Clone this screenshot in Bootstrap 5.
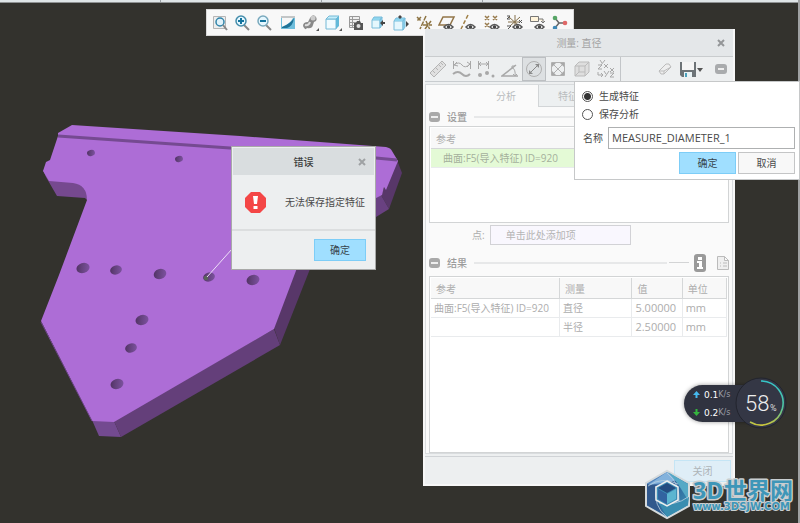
<!DOCTYPE html>
<html lang="zh-CN">
<head>
<meta charset="utf-8">
<meta name="viewport" content="width=device-width, initial-scale=1">
<title>测量: 直径</title>
<link href="https://cdn.jsdelivr.net/npm/bootstrap@5.3.0/dist/css/bootstrap.min.css" rel="stylesheet">
<style>
  body { background: #33322d; font-family: "Open Sans", "Noto Sans CJK SC", sans-serif; font-size: 10px; line-height: 16px; color: #4a4a4a; }
  svg { display: block; }
  .desk { min-height: 100vh; }
  .desk-edge { right: 0; top: 0; bottom: 0; width: 2px; background: #9fa1a2; }
  .ribbon-edge { height: 3px; background: #dfe5e7; border-bottom: 1px solid #8f9293; }
  .ribbon-edge i { width: 1px; height: 2px; background: #9aa0a4; margin-left: 160px; }
  .model { left: 0; top: 0; width: 420px; height: 460px; }
  .btn { --bs-btn-font-size: 10px; --bs-btn-line-height: 16px; --bs-btn-padding-y: 2px; --bs-btn-padding-x: 0; --bs-btn-border-radius: 0; width: 57px; height: 22px; }
  .btn-sky { --bs-btn-bg: #a0dfff; --bs-btn-border-color: #7dcdf7; --bs-btn-color: #37444c; }
  .btn-plain { --bs-btn-bg: #f8f8f8; --bs-btn-border-color: #c4c5c6; --bs-btn-color: #4a4a4a; }
  .btn-close-panel { --bs-btn-bg: #dfeef7; --bs-btn-border-color: #c5e5f5; --bs-btn-color: #aeb4b8; }
  .tool { border: 0; background: none; padding: 0; }
  .viewbar { left: 206px; top: 9px; height: 27px; width: 368px; background: #f8f8f8; border: 1px solid #d9d9d9; padding: 0 4px; }
  .viewbar svg { width: 18px; height: 18px; }
  .panel { left: 423px; top: 29px; width: 312px; background: #edeff0; border: 2px solid #f7f7f7; border-top: 0; color: #adadad; }
  .panel-title { height: 28px; background: #e4e7e9; border-bottom: 1px solid #c9ccce; color: #a2a2a2; font-size: 10px; }
  .x-mark { right: 8px; }
  .panel-tools { height: 25px; border-bottom: 1px solid #c8cccf; }
  .panel-tools .group .tool { width: 24px; height: 24px; display: grid; place-items: center; }
  .panel-tools .tool.chosen { background: #dde0e2; border: 1px solid #bcbfc2; }
  .panel-tools .group { border-right: 1px solid #c3c6c9; padding-left: 1px; width: 196px; }
  .panel-tools .side { gap: 8px; padding-right: 6px; }
  .panel-body { margin-top: 2px; background: #fafafa; border: 1px solid #d9dcde; }
  .tabs { height: 22px; }
  .tabs .nav-link { width: 112px; padding: 2px 0 2px 70px; color: #b9bcbe; border: 0; background: #fafafa; border-radius: 0; height: 22px; font-size: 10px; line-height: 16px; text-align: left; }
  .tabs .spare { background: #edf0f1; border: 1px solid #d2d5d7; border-top: 0; padding-left: 19px; }
  .tabs .spare:last-child { width: auto; flex: 1; }
  .sect { height: 19px; padding: 0 3px; gap: 7px; }
  .sect h2 { font-size: 10px; line-height: 16px; margin: 0; font-weight: 500; color: #9c9c9c; }
  .rule { height: 2px; background: #e7e8e9; }
  .rule-end { width: 20px; height: 1px; background: #d3d4d5; margin-left: -5px; margin-right: -2px; }
  .well-box { margin: 0 3px; background: #fff; border: 1px solid #d2d4d5; padding: 1px; }
  .refs { height: 97px; }
  .results { height: 177px; }
  .grid { --bs-table-bg: transparent; margin: 0; color: #adadad; table-layout: fixed; white-space: nowrap; }
  .grid th, .grid td { padding: 1px 3px; height: 19px; line-height: 16px; border: 0 solid #e9ebed; border-width: 0 1px 1px 0; font-weight: 400; color: #adadad; }
  .grid th { height: 20px; padding: 2px 5px 1px; background: #f8f8f8; border-color: #d5d7d8; }
  .grid .num { font-size: 11px; }
  .refs th, .refs td { border-right: 0; }
  .refs td { background: #e4fad6; padding-left: 12px; color: #a4b09c; }
  .point { margin: 2px 0 0 46px; height: 20px; gap: 5px; }
  .point input { width: 141px; height: 20px; background: #f9f7fe; color: #b5b5b5; }
  .form-control { font-size: 10px; line-height: 16px; padding: 0 15px 2px; border: 1px solid #d2d2d6; border-radius: 0; min-height: 0; }
  .panel-foot { height: 28px; border-top: 1px solid #d0d3d6; padding: 3px 2px; margin-top: 2px; }
  .pop { right: 0; top: 81px; width: 226px; height: 99px; background: #fff; border: 1px solid #c6c8c9; padding: 5px 4px 6px 7px; z-index: 3; }
  .pop .form-check { min-height: 18px; padding: 0; margin: 0; gap: 6px; }
  .pop .form-check-input { width: 11px; height: 11px; margin: 0; float: none; border: 1px solid #555; }
  .pop .form-check-input:checked { background: radial-gradient(circle, #333 0 3px, #fff 4px); }
  .pop .form-control { height: 22px; padding: 1px 3px 3px; font-size: 11px; border-color: #aeb0b1; color: #4a4a4a; }
  .pop .name-row { gap: 5px; padding-left: 1px; }
  .pop .acts { gap: 2px; margin-top: 3px; }
  .alert-win { left: 231px; top: 146px; width: 145px; height: 124px; background: #edeff0; border: 1px solid #a8a9a8; z-index: 3; }
  .alert-win header { height: 27px; background: #d9dddf; color: #3d3d3d; font-weight: 500; margin: 1px 1px 0; }
  .alert-win main { height: 56px; border-bottom: 2px solid #dcdedf; padding: 0 10px 0 13px; }
  .alert-win footer { padding: 8px 9px; }
  .alert-win .btn { width: 52px; }
  .net { left: 684px; top: 377px; z-index: 4; }
  .net-rate { width: 74px; height: 37px; border-radius: 19px 0 0 19px; background: #303340; padding: 1px 0 0 9px; margin-right: -23px; font: 9px/18px "DejaVu Sans", sans-serif; color: #fff; box-shadow: 0 0 4px #0006; }
  .net-rate b { font-weight: 400; }
  .net-rate small { font-size: 8px; color: #9b9da6; }
  .net-rate svg { margin-right: 4px; }
  .brand-mark { left: 642px; top: 466px; z-index: 5; }
</style>
</head>
<body>
<div class="desk position-relative overflow-hidden">
  <div class="ribbon-edge d-flex"><i></i><i></i><i></i></div>
  <div class="desk-edge position-absolute"></div>

  <svg class="model position-absolute" viewBox="0 0 420 460" aria-hidden="true">
    <defs><linearGradient id="bore" x1="0" x2="1" y2=".3"><stop stop-color="#4c2e5d"/><stop offset=".45" stop-color="#62407a"/><stop offset="1" stop-color="#79509a"/></linearGradient></defs>
    <path fill="#76498f" d="M43 170L46 177L57 196L85 198L88 201L88 185L60 178Z"/>
    <path fill="#734a90" d="M92 420L99 436L121 437L114 421Z"/>
    <path fill="#643f7a" d="M114 421L121 437L280 345L274 329Z"/>
    <path fill="#583769" d="M274 328L280 345L310 269L330 240L297 265Z"/>
    <path fill="#583769" d="M397 160L402 173L389 209L381 195Z"/>
    <path fill="#694181" d="M381 195L389 209L376 217L350 230L350 210Z"/>
    <path fill="#ad6dd6" d="M72 125L240 136L386 147Q391 148 392 151L398 161L386 190L384 187L382 195L345 214L297 268L274 329L114 422L92 421L41 321L59 275L87 200Q87 185 73 183L49 181L43 171L46 162L50 160L58 136L58 133Z"/>
    <path fill="none" stroke="#754a91" stroke-width="3" d="M58 136L230 148L376 158L397 160"/>
    <path fill="none" stroke="#6c4586" d="M41 322L92 421"/>
    <g fill="url(#bore)">
      <ellipse cx="91" cy="153" rx="4" ry="3" transform="rotate(-15 91 153)"/>
      <ellipse cx="179" cy="159" rx="4" ry="3" transform="rotate(-15 179 159)"/>
      <ellipse cx="83" cy="268" rx="6.7" ry="5" transform="rotate(-18 83 268)"/>
      <ellipse cx="116" cy="270" rx="6" ry="4.5" transform="rotate(-18 116 270)"/>
      <ellipse cx="160" cy="274" rx="6.4" ry="5" transform="rotate(-18 160 274)"/>
      <ellipse cx="209" cy="277" rx="6" ry="4.5" transform="rotate(-18 209 277)"/>
      <ellipse cx="253" cy="280" rx="6.5" ry="5" transform="rotate(-18 253 280)"/>
      <ellipse cx="142" cy="320" rx="6.6" ry="5" transform="rotate(-18 142 320)"/>
      <ellipse cx="131" cy="348" rx="6" ry="4.6" transform="rotate(-18 131 348)"/>
      <ellipse cx="117" cy="384" rx="6.6" ry="5" transform="rotate(-18 117 384)"/>
    </g>
    <circle cx="206" cy="278" r="2.3" fill="#59645a"/>
    <path stroke="#eee0f8" d="M207 277L232 249"/>
  </svg>

  <!-- View toolbar -->
  <nav class="viewbar position-absolute d-flex align-items-center justify-content-between" aria-label="视图">
    <button class="tool" aria-label="重新调整"><svg viewBox="0 0 18 18" fill="none"><path d="M2.500 2.500h12v12h-12z" stroke="#b5b5b5" fill="#eee"/><circle cx="9" cy="8" r="4" stroke="#3184a9" stroke-width="1.500" fill="#e0f2fa"/><path d="M12 11l4 5" stroke="#888" stroke-width="2"/></svg></button>
    <button class="tool" aria-label="放大"><svg viewBox="0 0 18 18" fill="none"><path d="M10 11l5 5" stroke="#888" stroke-width="2"/><circle cx="7" cy="7" r="5" stroke="#448dab" stroke-width="1.500" fill="#e5f7ff"/><path d="M4 7h6M7 4v6" stroke="#14749e" stroke-width="2"/></svg></button>
    <button class="tool" aria-label="缩小"><svg viewBox="0 0 18 18" fill="none"><path d="M10 11l5 5" stroke="#888" stroke-width="2"/><circle cx="7" cy="7" r="5" stroke="#79a9bd" stroke-width="1.500" fill="#e5f7ff"/><path d="M4 7h6" stroke="#14749e" stroke-width="2"/></svg></button>
    <button class="tool" aria-label="重画"><svg viewBox="0 0 18 18"><path fill="#c3c6c7" d="M2 2h14v2H2z"/><path fill="#6fbedc" d="M2 4h14v11H2z"/><path fill="#f7f7f7" d="M3 4h11Q11 10 3 13z"/><path fill="#1e7397" d="M3 13Q11 10 15 4Q14 12 8 14H3z"/></svg></button>
    <button class="tool" aria-label="渲染"><svg viewBox="0 0 18 18"><path fill="#8a8a8a" d="M1 12q0-4 5-4l2-4q3-5 6-1q2 4-2 5l-1 3q-1 4-6 3q-2 3-4-2"/><circle cx="11" cy="4" r="2.500" fill="#ccc"/><path d="M3 11q4 1 5-3" stroke="#ddd" stroke-width="2" fill="none"/><path fill="#555" d="M17 14v3h-3z"/></svg></button>
    <button class="tool" aria-label="显示样式"><svg viewBox="0 0 18 18"><path fill="#f1fbff" stroke="#74b9d6" d="M2 5h10v10H2z"/><path fill="#c3edfa" stroke="#74b9d6" d="M2 5l3-3h10l-3 3z"/><path fill="#62b9d9" d="M12 5l3-3v10l-3 3z"/><path fill="#555" d="M18 14v3h-3z"/></svg></button>
    <button class="tool" aria-label="已保存方向"><svg viewBox="0 0 18 18"><path fill="#eee" stroke="#999" d="M2.500 2.500h10v11h-10zM2 5.500h10M2 8.500h10M2 11.500h10M5.500 3v11"/><path fill="#555" d="M7 9h2l1-2h3l1 2h2v7H7z"/><circle cx="11.500" cy="12" r="2" fill="#ddd"/></svg></button>
    <button class="tool" aria-label="视图管理器"><svg viewBox="0 0 18 18"><path fill="#e5f7fd" stroke="#7abddb" d="M2 6h8v8H2z"/><path fill="#8ed5ee" stroke="#7abddb" d="M2 6l2-3h8l-2 3M10 6l2-3v8l-2 3z"/><path fill="#444" d="M10 9l3-3v2h2v2h-2v2z"/></svg></button>
    <button class="tool" aria-label="透视图"><svg viewBox="0 0 18 18"><path fill="#e5f7fd" stroke="#7abddb" d="M2 7h9v9H2z"/><path fill="#8ed5ee" stroke="#7abddb" d="M2 7l2-3h9l-2 3M11 7l2-3v9l-2 3z"/><path fill="#444" d="M6 3l2-2 2 2-2 2zM14 7l3 3-3 3z"/></svg></button>
    <button class="tool" aria-label="基准显示"><svg viewBox="0 0 18 18" fill="none" stroke="#8d7443" stroke-width="1.500"><path d="M2 3l4 4M6 3L2 7M11 2L5 15M8 11h9M10 15l6-8M11 7l4 9" stroke-dasharray="5 1"/></svg></button>
    <button class="tool" aria-label="平面显示"><svg viewBox="0 0 18 18" fill="none"><path d="M5 3h11l-4 8H1z" stroke="#927548" stroke-width="1.500"/><path fill="#eee" stroke="#555" stroke-width="1.500" d="M6 13q4.500-5 9 0q-4.500 5-9 0z"/><circle cx="10.500" cy="13" r="1.700" fill="#444"/></svg></button>
    <button class="tool" aria-label="轴显示"><svg viewBox="0 0 18 18" fill="none"><path d="M8 1L1 15" stroke="#a18147" stroke-width="1.500" stroke-dasharray="4 2"/><path fill="#eee" stroke="#555" stroke-width="1.500" d="M6 13q4.500-5 9 0q-4.500 5-9 0z"/><circle cx="10.500" cy="13" r="1.700" fill="#444"/></svg></button>
    <button class="tool" aria-label="点显示"><svg viewBox="0 0 18 18" fill="none"><path d="M2 2l4 4M6 2L2 6M10 2l4 4M14 2l-4 4M2 9l4 4M6 9l-4 4" stroke="#987b4d" stroke-width="1.500"/><path fill="#eee" stroke="#555" stroke-width="1.500" d="M7 13q4.500-5 9 0q-4.500 5-9 0z"/><circle cx="11.500" cy="13" r="1.700" fill="#444"/></svg></button>
    <button class="tool" aria-label="坐标系显示"><svg viewBox="0 0 18 18" fill="none"><path d="M9 1v10M3 3l10 9M14 3L4 12M2 8h12" stroke="#85714b"/><path d="M1 2h3L1 5h3M1 12h4l-4 4h4M13 6l3 3M16 6l-3 3" stroke="#555"/><path fill="#eee" stroke="#555" stroke-width="1.500" d="M7 13q4.500-5 9 0q-4.500 5-9 0z"/><circle cx="11.500" cy="13" r="1.700" fill="#444"/></svg></button>
    <button class="tool" aria-label="注释显示"><svg viewBox="0 0 18 18" fill="none"><path fill="#fff4db" stroke="#777" d="M2.500 2.500h8v5h-8zM11 5h4v4M13 7l2 2 2-2"/><path fill="#eee" stroke="#555" stroke-width="1.500" d="M7 13q4.500-5 9 0q-4.500 5-9 0z"/><circle cx="11.500" cy="13" r="1.700" fill="#444"/></svg></button>
    <button class="tool" aria-label="旋转中心"><svg viewBox="0 0 18 18"><path d="M4 4l4 5h6M8 9l-4 5" stroke="#666" stroke-width="1.500" fill="none"/><circle cx="4" cy="4" r="2.300" fill="#57a566"/><circle cx="14" cy="9" r="2.300" fill="#df6868"/><circle cx="4" cy="14" r="2.300" fill="#3f88b5"/></svg></button>
  </nav>

  <!-- Measure panel -->
  <section class="panel position-absolute" aria-label="测量">
    <header class="panel-title position-relative d-flex align-items-center justify-content-center">测量: 直径
      <button class="tool x-mark position-absolute" aria-label="关闭窗口"><svg width="8" height="8" viewBox="0 0 8 8" stroke="#949698" stroke-width="2"><path d="M1 1l6 6M7 1L1 7"/></svg></button>
    </header>
    <div class="panel-tools d-flex align-items-center">
      <div class="group d-flex">
        <button class="tool" aria-label="汇总"><svg width="18" height="18" viewBox="0 0 18 18" fill="#e0e0e0" stroke="#b4b4b4"><path d="M1 13L13 1l4 4L5 17zM4 11l2 2M7 8l2 2M10 5l2 2M12 3l2 2"/></svg></button>
        <button class="tool" aria-label="长度"><svg width="20" height="18" viewBox="0 0 20 18" fill="none" stroke="#a8a8a8"><path d="M1.500 1v8M18.500 1v8M2 5q5-4 8 0t8-1M5 2L2 5l4 1M15 2l3 2-3 3"/><path stroke-width="2" d="M1 14q5-4 9 0t8 0"/></svg></button>
        <button class="tool" aria-label="距离"><svg width="18" height="18" viewBox="0 0 18 18" fill="none" stroke="#a8a8a8"><path d="M1.500 1v8M11.500 1v8M2 4h9M4 2L2 4l2 2M9 2l2 2-2 2"/><g fill="#a8a8a8" stroke="none"><circle cx="3" cy="15" r="2"/><circle cx="10" cy="13" r="2"/><circle cx="16" cy="16" r="1.500"/></g></svg></button>
        <button class="tool" aria-label="角度"><svg width="18" height="18" viewBox="0 0 18 18" fill="none" stroke="#a8a8a8"><path stroke-width="1.500" d="M15 5L1 16h16"/><path d="M11 7q4 3 3 9M11 9V6h3M12 14l2 2 2-2"/></svg></button>
        <button class="tool chosen" aria-label="直径" aria-pressed="true"><svg width="18" height="18" viewBox="0 0 18 18" fill="none" stroke="#b0b0b0"><circle cx="9" cy="9" r="7.500"/><path stroke="#8b8b8b" d="M5 13l8-8"/><path fill="#8b8b8b" stroke="none" d="M4 14v-4l4 4zM14 4v4l-4-4z"/></svg></button>
        <button class="tool" aria-label="面积"><svg width="18" height="18" viewBox="0 0 18 18" fill="none" stroke="#b0b0b0"><path d="M2.500 2.500h13v13h-13zM4 4l10 10M14 4L4 14"/><path fill="#a8a8a8" stroke="none" d="M3 3h4L3 7zM15 3v4l-4-4zM15 15h-4l4-4zM3 15v-4l4 4z"/></svg></button>
        <button class="tool" aria-label="体积"><svg width="18" height="18" viewBox="0 0 18 18" fill="#dedede" stroke="#bbb"><path d="M2 6l4-4h10v10l-4 4H2zM2 6h10v10M12 6l4-4M6 6v6l-4 4M6 12h6"/></svg></button>
        <button class="tool" aria-label="变换"><svg width="20" height="18" viewBox="0 0 20 18" fill="none" stroke="#a8a8a8"><path d="M4 0l2 3M9 0L5 5M2 5h4L2 9h4M8 4l4 4M12 4L8 8M14 8l4 4M18 8l-4 4M14 13h4l-4 4h4M8 11l2 3M13 11l-4 6M2 12v3h5M5 13l2 2-2 2"/></svg></button>
      </div>
      <div class="side d-flex flex-fill align-items-center justify-content-end">
        <button class="tool" aria-label="清除"><svg width="14" height="12" viewBox="0 0 14 12" fill="#eee" stroke="#bbb"><path d="M1 8l7-7h3l2 3-7 7H3zM1 8h5l7-4M6 8v3"/></svg></button>
        <button class="tool" aria-label="保存"><svg width="23" height="17" viewBox="0 0 23 17"><path fill="#6d7377" d="M0 1h16v15H2l-2-2z"/><path fill="#f5f5f5" d="M2 1h12v8H2z"/><path fill="#e9f3f6" d="M4 11h8v5H4z"/><path fill="#4ba0bb" d="M5 12h2v4H5z"/><path fill="#555" d="M17 7h6l-3 4z"/></svg></button>
        <button class="tool ms-1" aria-label="收起"><svg width="12" height="10" viewBox="0 0 12 10"><rect width="12" height="10" rx="3" fill="#a9abad"/><path stroke="#eee" stroke-width="2" d="M3 5h6"/></svg></button>
      </div>
    </div>
    <div class="panel-body">
      <div class="tabs nav flex-nowrap">
        <button class="nav-link">分析</button>
        <button class="nav-link spare">特征</button>
      </div>
      <div class="sect d-flex align-items-center">
        <svg width="11" height="10" viewBox="0 0 11 10"><rect width="11" height="10" rx="3" fill="#a9a9a9"/><path stroke="#eee" stroke-width="2" d="M2 5h7"/></svg>
        <h2>设置</h2><span class="rule flex-fill"></span>
      </div>
      <div class="well-box refs">
        <table class="grid table"><thead><tr><th scope="col">参考</th></tr></thead><tbody><tr><td>曲面:F5(导入特征) ID=920</td></tr></tbody></table>
      </div>
      <div class="point d-flex align-items-center">
        <label for="pt">点:</label><input id="pt" class="form-control" value="单击此处添加项">
      </div>
      <div class="sect d-flex align-items-center mt-2 mb-1">
        <svg width="11" height="10" viewBox="0 0 11 10"><rect width="11" height="10" rx="3" fill="#a9a9a9"/><path stroke="#eee" stroke-width="2" d="M2 5h7"/></svg>
        <h2>结果</h2><span class="rule flex-fill"></span><span class="rule-end"></span>
        <button class="tool" aria-label="信息"><svg width="12" height="18" viewBox="0 0 12 18"><rect width="12" height="18" rx="3" fill="#9a9a9a"/><path fill="#fff" d="M4 3h4v3H4zM3 7h5v6h1v2H3v-2h2V9H3z"/></svg></button>
        <button class="tool ms-1" aria-label="报告"><svg width="12" height="14" viewBox="0 0 12 14" fill="#efefef" stroke="#bbb"><path d="M.5.500h7l4 4v9H.5zM7.500.500v4h4M3 7h1M3 10h1M6 7h4M6 10h4"/></svg></button>
      </div>
      <div class="well-box results">
        <table class="grid table">
          <colgroup><col style="width:43.5%"><col style="width:24.5%"><col style="width:17%"><col></colgroup>
          <thead><tr><th scope="col">参考</th><th scope="col">测量</th><th scope="col">值</th><th scope="col">单位</th></tr></thead>
          <tbody><tr><td>曲面:F5(导入特征) ID=920</td><td>直径</td><td class="num">5.00000</td><td class="num">mm</td></tr>
          <tr><td></td><td>半径</td><td class="num">2.50000</td><td class="num">mm</td></tr></tbody>
        </table>
      </div>
    </div>
    <footer class="panel-foot d-flex justify-content-end"><button class="btn btn-close-panel">关闭</button></footer>
  </section>

  <!-- Save options -->
  <form class="pop position-absolute">
    <div class="form-check d-flex align-items-center"><input class="form-check-input" type="radio" name="mode" id="mk" checked><label for="mk">生成特征</label></div>
    <div class="form-check d-flex align-items-center"><input class="form-check-input" type="radio" name="mode" id="sv"><label for="sv">保存分析</label></div>
    <div class="name-row d-flex align-items-center mt-1"><label class="flex-shrink-0" for="nm">名称</label><input id="nm" class="form-control" value="MEASURE_DIAMETER_1"></div>
    <div class="acts d-flex justify-content-end"><button type="button" class="btn btn-sky">确定</button><button type="button" class="btn btn-plain">取消</button></div>
  </form>

  <!-- Error message -->
  <section class="alert-win position-absolute" role="alertdialog" aria-labelledby="err">
    <header class="position-relative d-flex align-items-center justify-content-center"><span id="err">错误</span>
      <button class="tool x-mark position-absolute" aria-label="关闭提示"><svg width="8" height="8" viewBox="0 0 8 8" stroke="#9fa2a4" stroke-width="2"><path d="M1 1l6 6M7 1L1 7"/></svg></button>
    </header>
    <main class="d-flex align-items-center justify-content-between">
      <svg width="21" height="21" viewBox="0 0 21 21"><path fill="#f44646" d="M6 0h9l6 6v9l-6 6H6l-6-6V6z"/><path fill="#fff" d="M8 4h5l-1 8H9zM8.500 14h4v3h-4z"/></svg>
      <span>无法保存指定特征</span>
    </main>
    <footer class="d-flex justify-content-end"><button class="btn btn-sky">确定</button></footer>
  </section>

  <!-- Network monitor -->
  <aside class="net position-absolute d-flex align-items-center">
    <div class="net-rate">
      <div class="d-flex align-items-center"><svg width="7" height="7" viewBox="0 0 7 7" fill="#45b9ee"><path d="M3.500 0L7 4H4.500v3h-2V4H0z"/></svg><b>0.1</b><small>K/s</small></div>
      <div class="d-flex align-items-center"><svg width="7" height="7" viewBox="0 0 7 7" fill="#35b53e"><path d="M3.500 7L7 3H4.500V0h-2v3H0z"/></svg><b>0.2</b><small>K/s</small></div>
    </div>
    <svg width="52" height="52" viewBox="0 0 52 52">
      <defs><linearGradient id="arc" x2="0" y2="1"><stop stop-color="#35c5c8"/><stop offset=".6" stop-color="#4fc4a0"/><stop offset="1" stop-color="#c9c43c"/></linearGradient></defs>
      <circle cx="26" cy="26" r="25" fill="#343745" stroke="#22242d"/>
      <path d="M26 4A22 22 0 1 1 15 45" fill="none" stroke="url(#arc)" stroke-width="1.600"/>
      <text x="10" y="34" font-family="Roboto, sans-serif" font-weight="300" font-size="22" fill="#eee">58</text>
      <text x="35" y="34" font-family="Roboto, sans-serif" font-size="9" fill="#ddd">%</text>
    </svg>
  </aside>

  <svg class="brand-mark position-absolute" width="156" height="54" viewBox="0 0 156 54">
    <defs><linearGradient id="hx" x2="1" y2="1"><stop stop-color="#6c9fd6"/><stop offset=".45" stop-color="#2f5e98"/><stop offset="1" stop-color="#3f9fbc"/></linearGradient></defs>
    <path fill="url(#hx)" stroke="#d5dadc" stroke-width="2" d="M25 5L47 17V40L25 52L4 40V17Z"/>
    <path fill="#31588c" d="M5 18L17 19L14 34L21 48L5 39Z"/>
    <path fill="#398db0" d="M47 31L34 37L21 38L15 34L25 51L46 39Z"/>
    <path fill="#83b2dc" d="M25 6L36 14L20 17L6 19Z"/>
    <path fill="#56a9c6" d="M26 6L46 18V34L36 18Z"/>
    <path fill="none" stroke="#b9cfdf" stroke-width=".8" d="M6 20Q20 10 36 18M25 7Q38 17 37 36M46 31Q34 40 17 37M25 51Q11 41 14 20"/>
    <path fill="#3e8db5" stroke="#eee" stroke-width="1.500" d="M25 15L36 21V34L25 40L14 34V21Z"/>
    <path fill="#254c80" d="M25 17L34 22L25 27L16 22Z"/><path fill="#3263a0" d="M16 23L25 28V38L16 33Z"/><path fill="#5cb5d0" d="M34 23L25 28V38L34 33Z"/>
    <g stroke="#c9ced0" stroke-width="3" stroke-linejoin="round" paint-order="stroke" fill="#3e96b8">
      <text x="51" y="33" font-family="Open Sans, sans-serif" font-size="23" font-weight="700">3D</text>
      <text x="82" y="33" font-family="Noto Sans CJK SC, sans-serif" font-size="23" font-weight="700">世界网</text>
      <text x="51" y="44" font-family="DejaVu Sans, sans-serif" font-size="10" font-weight="700" stroke-width="2">www.3DSJW.COM</text>
    </g>
  </svg>
</div>
<script src="https://cdn.jsdelivr.net/npm/bootstrap@5.3.0/dist/js/bootstrap.bundle.min.js"></script>
</body>
</html>
